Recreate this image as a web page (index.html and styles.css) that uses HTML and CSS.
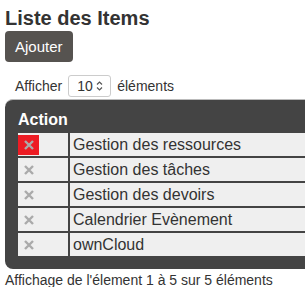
FILE: index.html
```html
<!DOCTYPE html>
<html lang="fr">
<head>
    <meta charset="UTF-8">
    <title>Liste des Items</title>
    <link rel="stylesheet" href="styles.css">
</head>
<body>
    <!-- Header -->
    <h1 class="page-title">Liste des Items</h1>
    <button class="btn-add">Ajouter</button>

    <!-- Length selector -->
    <div class="length">
        Afficher
        <span class="length-select">
            <span class="length-value">10</span>
            <svg class="length-arrows" width="7" height="12" viewBox="0 0 7 12">
                <path d="M1 4.5 L3.5 2 L6 4.5" fill="none" stroke="#555" stroke-width="1.2"/>
                <path d="M1 7.5 L3.5 10 L6 7.5" fill="none" stroke="#555" stroke-width="1.2"/>
            </svg>
        </span>
        éléments
    </div>

    <!-- Items table -->
    <div class="table-wrap">
        <table class="items">
            <thead>
                <tr>
                    <th class="col-action">Action</th>
                    <th></th>
                </tr>
            </thead>
            <tbody>
                <tr>
                    <td><span class="del active"><svg width="10" height="10" viewBox="0 0 10 10"><path d="M1 1 L9 9 M9 1 L1 9" stroke="#aaa" stroke-width="2.4"/></svg></span></td>
                    <td>Gestion des ressources</td>
                </tr>
                <tr>
                    <td><span class="del"><svg width="10" height="10" viewBox="0 0 10 10"><path d="M1 1 L9 9 M9 1 L1 9" stroke="#aaa" stroke-width="2.4"/></svg></span></td>
                    <td>Gestion des tâches</td>
                </tr>
                <tr>
                    <td><span class="del"><svg width="10" height="10" viewBox="0 0 10 10"><path d="M1 1 L9 9 M9 1 L1 9" stroke="#aaa" stroke-width="2.4"/></svg></span></td>
                    <td>Gestion des devoirs</td>
                </tr>
                <tr>
                    <td><span class="del"><svg width="10" height="10" viewBox="0 0 10 10"><path d="M1 1 L9 9 M9 1 L1 9" stroke="#aaa" stroke-width="2.4"/></svg></span></td>
                    <td>Calendrier Evènement</td>
                </tr>
                <tr>
                    <td><span class="del"><svg width="10" height="10" viewBox="0 0 10 10"><path d="M1 1 L9 9 M9 1 L1 9" stroke="#aaa" stroke-width="2.4"/></svg></span></td>
                    <td>ownCloud</td>
                </tr>
            </tbody>
        </table>
    </div>

    <div class="info">Affichage de l'élement 1 à 5 sur 5 éléments</div>
</body>
</html>
```

FILE: styles.css
```css
* {
    margin: 0;
    padding: 0;
    box-sizing: border-box;
}

body {
    font-family: "Liberation Sans", Arial, sans-serif;
    color: #333;
    padding: 0 0 0 5px;
    overflow: hidden;
}

.page-title {
    font-size: 20px;
    font-weight: bold;
    line-height: 24px;
    padding-top: 6px;
    color: #333;
}

.btn-add {
    display: block;
    margin-top: 1px;
    height: 31px;
    padding: 0 10px;
    background: #565350;
    color: #fff;
    border: none;
    border-radius: 4px;
    font-family: inherit;
    font-size: 15px;
}

.length {
    display: flex;
    align-items: center;
    gap: 6px;
    margin-top: 13px;
    padding-left: 10px;
    font-size: 14px;
    height: 22px;
}

.length-select {
    display: flex;
    align-items: center;
    justify-content: space-between;
    width: 43px;
    height: 22px;
    padding: 0 7px 0 8px;
    border: 1px solid #ccc;
    border-radius: 3px;
    background: #fff;
}

.table-wrap {
    margin-top: 2px;
    background: #444;
    border-top: 1px solid #bbb;
    border-radius: 8px 0 0 8px;
    padding: 7px 0 11px 11px;
    overflow: hidden;
}

.items {
    border-collapse: separate;
    border-spacing: 2px;
    width: calc(100% + 2px);
    font-size: 16px;
}

.items th {
    height: 22px;
    text-align: left;
    color: #fff;
    font-weight: bold;
    vertical-align: bottom;
    padding: 0 0 2px 0;
}

.items td {
    height: 23px;
    background: #efefef;
    padding: 0 3px;
    vertical-align: middle;
}

.items .col-action {
    width: 50px;
}

.items td:first-child {
    padding: 0;
}

.del {
    display: flex;
    align-items: center;
    justify-content: center;
    width: 21px;
    height: 20px;
}

.del.active {
    background: #ed1c24;
}

.info {
    margin-top: 3px;
    font-size: 14px;
}
```
